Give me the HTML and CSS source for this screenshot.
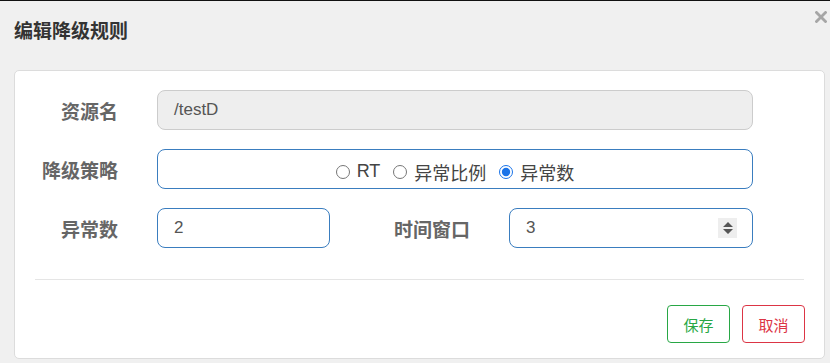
FILE: index.html
```html
<!DOCTYPE html>
<html lang="zh">
<head>
<meta charset="utf-8">
<link rel="stylesheet" href="styles.css">
</head>
<body>
<div class="modal">
  <div class="modal-header">
    <h4 class="title">编辑降级规则</h4>
    <span class="close" aria-label="关闭">
      <svg width="12" height="12" viewBox="0 0 12 12"><path d="M1.5 1.5 L10.5 10.5 M10.5 1.5 L1.5 10.5" stroke="#a6a6a6" stroke-width="2.8" stroke-linecap="square"/></svg>
    </span>
  </div>
  <div class="panel">
    <div class="form">
      <div class="row">
        <label class="label">资源名</label>
        <div class="field field-disabled field-full">/testD</div>
      </div>
      <div class="row">
        <label class="label">降级策略</label>
        <div class="field field-active field-full radios">
          <label class="radio"><input type="radio" name="grade"><span>RT</span></label>
          <label class="radio"><input type="radio" name="grade"><span>异常比例</span></label>
          <label class="radio"><input type="radio" name="grade" checked><span>异常数</span></label>
        </div>
      </div>
      <div class="row">
        <label class="label">异常数</label>
        <div class="field field-active field-small">2</div>
        <label class="label label-wide">时间窗口</label>
        <div class="field field-active field-mid">
          <span class="value">3</span>
          <span class="spinner">
            <svg width="12" height="16" viewBox="0 0 12 16"><path d="M6 2 L11 7 L1 7 Z M1 9 L11 9 L6 14 Z" fill="#555"/></svg>
          </span>
        </div>
      </div>
    </div>
    <div class="divider"></div>
    <div class="actions">
      <button class="btn btn-save">保存</button>
      <button class="btn btn-cancel">取消</button>
    </div>
  </div>
</div>
</body>
</html>
```
FILE: styles.css
```css
html, body {
  margin: 0;
  padding: 0;
  background: #f0f0f0;
}
body {
  font-family: "Liberation Sans", "Noto Sans CJK SC", Arial, sans-serif;
  color: #333;
  border-top: 1px solid #111;
  height: 362px;
  overflow: hidden;
}
.modal {
  padding: 0 5px 0 14px;
}
.modal-header {
  display: flex;
  justify-content: space-between;
  align-items: flex-start;
  height: 69px;
}
.title {
  margin: 0;
  padding-top: 15px;
  font-family: "Noto Sans CJK SC", sans-serif;
  font-size: 19px;
  font-weight: 700;
  line-height: 27px;
  color: #333;
}
.close {
  display: block;
  margin-top: 10px;
  margin-right: -2px;
  line-height: 0;
}
.panel {
  background: #fff;
  border: 1px solid #dcdcdc;
  border-radius: 5px;
  height: 289px;
  box-sizing: border-box;
  padding-top: 19px;
}
.form {
  display: flex;
  flex-direction: column;
  gap: 19px;
}
.row {
  display: flex;
  align-items: center;
  height: 40px;
}
.label {
  width: 103px;
  margin-right: 39px;
  text-align: right;
  font-family: "Noto Sans CJK SC", sans-serif;
  font-size: 19px;
  font-weight: 700;
  color: #666;
  flex: none;
}
.label-wide {
  width: 140px;
}
.field {
  box-sizing: border-box;
  height: 40px;
  border-radius: 8px;
  border: 1px solid #ccc;
  display: flex;
  align-items: center;
  padding: 0 16px;
  font-size: 17px;
  color: #555;
  flex: none;
}
.field-disabled {
  background: #eee;
  border-color: #ccc;
}
.field-active {
  border-color: #3a7dbf;
}
.field-full { width: 596px; }
.field-small { width: 173px; }
.field-mid {
  width: 244px;
  justify-content: space-between;
  padding-right: 15px;
}
.spinner {
  width: 19px;
  height: 20px;
  background: #eee;
  display: flex;
  align-items: center;
  justify-content: center;
}
.radios {
  justify-content: center;
  gap: 13px;
  padding-top: 5px;
}
.radio {
  display: flex;
  align-items: center;
  font-family: "Liberation Sans", "Noto Sans CJK SC", sans-serif;
  font-size: 18px;
  color: #444;
}
.radio input {
  width: 14px;
  height: 14px;
  margin: 0 7px 0 0;
  accent-color: #1a73e8;
}
.divider {
  margin: 31px 20px 0 20px;
  border-top: 1px solid #e5e5e5;
}
.actions {
  display: flex;
  justify-content: flex-end;
  gap: 12px;
  margin: 25px 19px 0 0;
}
.btn {
  width: 63px;
  height: 38px;
  box-sizing: border-box;
  background: #fff;
  border-radius: 4px;
  font-family: "Noto Sans CJK SC", sans-serif;
  font-size: 15px;
  padding: 0;
  cursor: pointer;
}
.btn-save {
  border: 1px solid #28a745;
  color: #28a745;
}
.btn-cancel {
  border: 1px solid #dc3545;
  color: #dc3545;
}
```
